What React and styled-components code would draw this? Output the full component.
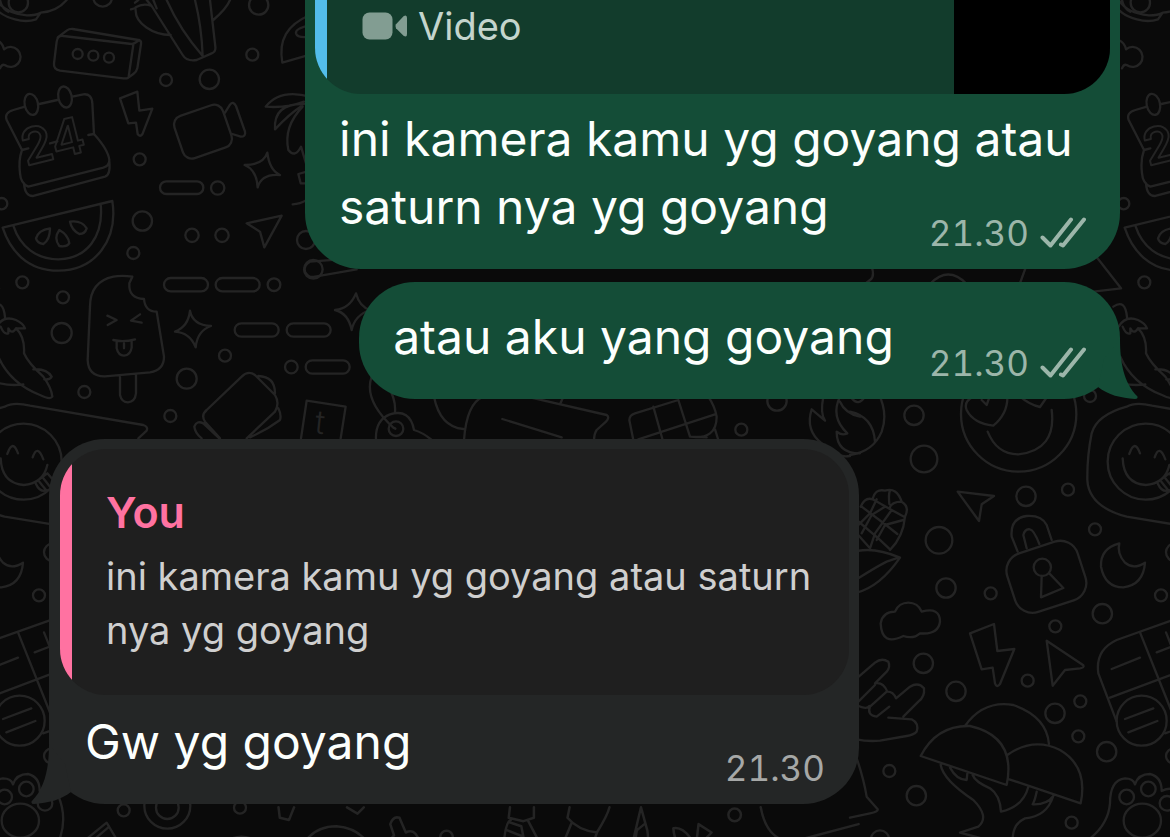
import React from 'react';
import styled, { createGlobalStyle, css } from 'styled-components';

const GlobalStyle = createGlobalStyle`
  * { box-sizing: border-box; }
  body {
    margin: 0;
    background: #0a0a0a;
    font-family: Inter, "Liberation Sans", sans-serif;
  }
  p { margin: 0; }
`;

const Screen = styled.main`
  position: relative;
  z-index: 0;
  min-height: 100vh;
  overflow: hidden;
  display: flex;
  flex-direction: column;
  padding: 0 50px 32px 49px;
`;

const WallpaperSvg = styled.svg`
  position: absolute;
  inset: 0;
  z-index: -1;
  width: 100%;
  height: 100%;
  fill: none;
  stroke: #242424;
  stroke-linecap: round;
  stroke-linejoin: round;
`;

const Bubble = styled.article`
  position: relative;
  max-width: 815px;
  align-self: flex-end;
  color: #fcfffd;
  background: #144d37;
  border-radius: ${(p) => (p.$cut ? '0 0 56px 56px' : '56px')};
  margin-top: ${(p) => p.$gap || 0}px;
  ${(p) =>
    p.$incoming &&
    css`
      max-width: 810px;
      align-self: flex-start;
      background: #242626;
      padding-top: 10px;
    `}
`;

const Tail = styled.svg`
  position: absolute;
  bottom: 0;
  width: 42px;
  height: 60px;
  ${(p) => (p.$incoming ? 'left: -18px; transform: scaleX(-1);' : 'right: -18px;')}
  fill: ${(p) => (p.$incoming ? '#242626' : '#144d37')};
`;

const Quote = styled.blockquote`
  display: flex;
  margin: 0 10px 0 ${(p) => (p.$incoming ? 11 : 10)}px;
  overflow: hidden;
  background: ${(p) => (p.$incoming ? '#1f1f1f' : '#123c2c')};
  border-left: 0;
  border-radius: ${(p) => (p.$incoming ? '46px' : '0 0 46px 46px')};
`;

const Accent = styled.div`
  flex: 0 0 12px;
  background: ${(p) => p.$color};
`;

const QuoteBody = styled.div`
  flex: 1;
  min-width: 0;
  margin-top: ${(p) => (p.$incoming ? 0 : -1)}px;
  padding: ${(p) => (p.$incoming ? '36px 24px 38px 34px' : '0 34px 41px 35px')};
`;

const Author = styled.h2`
  margin: 0 0 10px;
  font-size: 43px;
  line-height: 54px;
  font-weight: 600;
  color: #ff72a1;
`;

const Excerpt = styled.p`
  display: flex;
  align-items: center;
  gap: 10px;
  font-size: 38px;
  line-height: 54px;
  color: ${(p) => (p.$incoming ? '#cfcfcf' : '#c4d5cd')};
`;

const Thumb = styled.div`
  flex: 0 0 156px;
  background: #000;
`;

const Content = styled.div`
  display: grid;
  grid-template-columns: ${(p) => (p.$inline ? '1fr auto' : '1fr')};
  column-gap: 35px;
  align-items: end;
  padding: ${(p) => p.$top}px 34px 14px ${(p) => (p.$incoming ? 36 : 34)}px;
`;

const Message = styled.p`
  grid-area: 1 / 1;
  margin-bottom: 14px;
  font-size: 48px;
  line-height: 68px;
`;

const Meta = styled.div`
  grid-row: 1;
  grid-column: ${(p) => (p.$inline ? 2 : 1)};
  justify-self: end;
  display: flex;
  align-items: center;
  gap: 11px;
  font-size: 35px;
  font-variant-numeric: tabular-nums;
  line-height: 44px;
  color: ${(p) => (p.$incoming ? '#a6a8a7' : '#9cb6aa')};
`;

const TickSvg = styled.svg`
  width: 46px;
  height: 32px;
  fill: none;
  stroke: currentColor;
  stroke-width: 4;
  stroke-linecap: round;
  stroke-linejoin: round;
`;

const CameraSvg = styled.svg`
  width: 46px;
  height: 28px;
  fill: #829d92;
`;

const Ticks = () => (
  <TickSvg viewBox="0 0 46 32" role="img" aria-label="Delivered">
    <path d="M2.500 20.500L10.500 28.500L31 2.500M21 27.500L23 28.500L44 2.500" />
  </TickSvg>
);

const Camera = () => (
  <CameraSvg viewBox="0 0 46 28" aria-hidden="true">
    <rect x="0.500" y="0.500" width="30" height="27" rx="7" />
    <path d="M34 12.200L41.500 4.200Q45 2 45 6V22Q45 26 41.500 23.800L34 16.200Q32.800 14.200 34 12.200Z" />
  </CameraSvg>
);

const BubbleTail = ({ incoming }) => (
  <Tail $incoming={incoming} viewBox="0 0 42 60" aria-hidden="true">
    <path d="M24 0C24 24 28 44 41.500 57.500Q42 60 39 60C25 59 12 56 2 48L8 20Z" />
  </Tail>
);

const Time = ({ incoming, inline, children }) => (
  <Meta $incoming={incoming} $inline={inline}>
    <time>{children}</time>
    {!incoming && <Ticks />}
  </Meta>
);

const Dots = ({ items }) => items.map(([x, y, r]) => <circle key={`${x}-${y}`} cx={x} cy={y} r={r} />);
const Pills = ({ items }) =>
  items.map(([x, y]) => <rect key={`${x}-${y}`} x={x} y={y} width="132" height="40" rx="20" />);

const THIRD = 'scale(0.33333)';

const Wallpaper = () => (
  <WallpaperSvg aria-hidden="true">
    <defs>
      <g id="doodles" strokeWidth="7">
        {/* bowl, cactus, brick, calendar, camcorder, palm, watermelon */}
        <g transform={THIRD}>
          <Dots items={[[308, -8, 28], [776, 15, 29], [757, 164, 18], [498, 240, 18], [628, 238, 29], [419, 478, 18], [653, 564, 20], [427, 663, 29], [576, 706, 20], [666, 706, 20], [400, 759, 18], [5, 611, 17], [918, 720, 27], [940, 808, 28], [55, 8, 29], [233, 162, 15], [280, 167, 15], [327, 173, 15]]} />
          <path d="M-30 0Q-10 45 45 58Q80 68 108 58L122 38M-10 0Q15 40 80 46Q110 46 122 38Q170 35 200 0M0 0Q5 25 25 35" />
          <path d="M405 8L415 0M393 28L407 24M407 30C405 70 460 105 512 105M407 22Q430 8 455 18L548 165Q560 185 590 180L635 160Q648 155 646 140L630 0M455 18L440 0M500 0Q540 90 608 168M585 0Q605 80 608 168M460 0L470 25M640 60Q680 25 690 0" />
          <path d="M930 45C860 75 835 120 847 188L930 164M930 76Q885 85 888 100Q892 115 930 110" />
          <path d="M-10 120Q8 128 12 148A30 30 0 1 1 14 195Q5 192 0 205" />
          <path d="M173 112L200 92Q208 86 218 87L415 120Q425 122 423 132L412 205Q410 215 400 222L385 233Q380 236 370 235L180 212Q160 208 162 190L170 125Q173 105 190 108L395 132Q402 132 418 120M400 134L386 230" />
          <path d="M75 320L40 330Q12 338 20 360L66 450Q55 480 60 520Q62 550 85 560L310 503Q328 498 328 480Q325 450 282 402L277 310Q275 280 250 283L217 290M118 312L172 300M66 450L85 445M150 430L172 424M265 405L282 402M72 550Q75 590 100 588L315 530Q332 525 328 485" />
          <ellipse cx="94" cy="313" rx="20" ry="32" transform="rotate(-12 94 313)" />
          <ellipse cx="195" cy="291" rx="20" ry="32" transform="rotate(-12 195 291)" />
          <text x="78" y="498" fontSize="150" fontWeight="600" transform="rotate(-14 78 498)" strokeWidth="6">24</text>
          <path d="M360 295L412 275L418 332L457 326L427 403Q420 412 413 402L408 368L385 370Z" />
          <rect x="532" y="328" width="154" height="134" rx="28" transform="rotate(-19 609 395)" />
          <path d="M675 338L690 314Q700 302 708 318L735 395Q738 410 722 410L697 402" />
          <rect x="480" y="544" width="130" height="38" rx="19" />
          <path d="M930 290Q840 265 797 320Q860 325 912 305M912 312Q820 310 825 388Q870 340 905 318M908 320Q850 380 865 450Q885 475 903 440L918 490M930 512L895 522L902 550L930 550M878 613Q900 612 920 600" />
          <path d="M734 495Q790 495 802 458Q808 510 840 525Q785 520 773 562Q770 510 734 495Z" />
          <path d="M740 670L845 647L793 742L780 695Z" />
          <path d="M8 683L337 603C355 720 285 812 175 812C80 812 30 750 8 683ZM40 677C60 740 110 778 175 778C260 776 312 710 302 612" />
          <path d="M108 715Q115 690 150 685Q150 720 130 732Q112 730 108 715ZM178 690Q205 705 208 730Q200 742 178 738Q160 715 178 690ZM210 665Q245 660 260 685Q255 702 238 702Q215 690 210 665Z" />
        </g>

        {/* chili, ice pop, sparkles, smiley, backpack */}
        <g transform={`translate(0 260) ${THIRD}`}>
          <Dots items={[[67, 67, 18], [189, 112, 18], [185, 219, 30], [253, 396, 18], [560, 356, 30], [511, 468, 18], [675, 287, 18], [874, 321, 19], [822, 74, 19], [-96, 408, 18], [71, 605, 114]]} />
          <Pills items={[[492, 54], [647, 54], [704, 190], [860, 190], [917, 301]]} />
          <path d="M397 50Q365 45 340 50Q270 65 270 140L263 300Q265 350 315 349L450 337Q492 330 492 290L470 155Q435 155 432 117Q385 115 388 70ZM360 350V405Q365 427 384 427Q405 425 408 400V345M322 167L350 180L323 195M420 163L393 182L425 188M340 240Q370 248 405 238M350 243V265Q355 287 372 287Q392 285 395 262V242M372 250V265" />
          <path d="M570 152Q578 195 633 198Q592 212 587 262Q570 218 525 215Q565 200 570 152ZM1068 100Q1078 140 1110 150Q1065 165 1055 210Q1045 160 1005 150Q1050 145 1068 100Z" />
          <path d="M1060 -5L930 5Q910 15 915 35Q925 55 945 50L1070 28" />
          <path d="M-26 140Q10 115 15 172M-10 200Q10 165 48 180Q70 190 75 205L50 205M2 200Q12 225 25 220L25 205Q35 225 48 205Q75 230 72 280Q85 310 130 350Q155 385 157 410Q150 420 120 405Q30 370 -5 290M100 328Q140 325 155 350Q150 360 133 358M0 370Q35 378 70 373" />
          <path d="M415 535L440 512Q445 500 430 495L90 437Q40 425 14 440Q-76 465 -91 520Q-105 590 -104 660Q-100 740 14 770L180 797" />
          <path d="M2 595Q5 670 71 675Q130 670 142 615M22 582Q38 535 54 580M98 592Q112 550 130 598M105 668L142 640L155 655M118 665L138 690M130 655L150 680M108 672Q120 700 145 690" />
          <path d="M660 535L615 485Q602 465 620 450L725 350Q745 330 765 345L825 405Q840 430 825 455L740 535M775 348Q825 350 825 400M835 445Q845 465 840 480Q800 510 750 532M658 535L610 490Q590 480 583 500Q585 520 605 535" />
          <path d="M903 535L920 422L1037 440L1022 535" />
          <text x="942" y="520" fontSize="98" fontWeight="300" transform="rotate(6 942 520)" stroke="none" fill="#242424">t</text>
        </g>

        {/* gap between the sent and the received bubbles */}
        <g transform={`translate(360 380) ${THIRD}`}>
          <Dots items={[[108, 146, 22], [1251, 63, 29], [1144, 149, 18]]} />
          <path d="M35 -10Q10 60 100 143L106 146M85 20Q108 60 105 95M48 180Q45 120 90 103Q150 85 162 150Q190 158 215 180M222 50Q240 140 310 147M312 180Q320 70 370 50M510 52L740 105Q750 112 738 125L710 150Q703 160 702 180M427 117L605 172M602 68L610 50" />
          <path d="M820 180L808 120Q808 105 825 100L955 60L990 170Q1070 180 1070 110Q1065 80 1045 50M880 80L908 180M835 178L1065 103M990 170L1040 172M1065 148L1075 180" />
          <path d="M1390 50Q1380 100 1395 122L1355 88Q1335 150 1385 190Q1420 235 1470 228M1440 50Q1410 110 1462 160Q1445 168 1430 155Q1430 220 1500 220M1440 65Q1455 100 1500 110" />
        </g>

        {/* heart-eyed face and the pieces between the green bubbles */}
        <g transform={`translate(850 260) ${THIRD}`}>
          <Dots items={[[192, 466, 29], [222, 597, 40], [506, 462, 173]]} />
          <path d="M85 400Q115 460 95 515Q70 575 0 585M0 455Q70 470 75 545M5 415Q25 440 45 410M413 515Q440 583 505 583Q620 570 605 450M370 410Q340 425 350 450Q370 490 430 497Q475 460 472 405M395 420L410 435L418 412M510 410Q540 435 570 441L595 405" />
          <path d="M65 20Q75 50 60 60L45 72M240 72Q295 15 350 72M528 20L508 75M700 -60L813 85L730 95" />
        </g>

        {/* corn, cloud, lock, moon, bolt, hand, mushrooms, paw */}
        <g transform={`translate(850 470) ${THIRD}`}>
          <Dots items={[[528, 79, 29], [654, 59, 18], [267, 211, 40], [288, 354, 29], [422, 370, 18], [735, 178, 18], [933, 376, 18], [757, 431, 29], [616, 469, 18], [220, 580, 29], [318, 664, 29], [533, 632, 18], [615, 730, 29], [691, 694, 18], [685, 799, 18], [770, 845, 29], [118, 903, 18], [199, 977, 29], [665, 1058, 18], [90, 1108, 27], [975, 247, 27], [970, 858, 22], [577, 292, 26], [875, 752, 75], [830, 981, 22], [895, 957, 22], [951, 1000, 22]]} />
          <path d="M323 65L432 78L395 103L387 153Z" />
          <path d="M32 110Q45 80 68 88Q75 55 105 62Q140 50 155 95Q180 110 165 140Q160 200 120 240M68 88L125 120L165 142M35 110L108 165L142 192M20 150L85 205L120 238M118 102Q115 70 120 62M155 95Q125 95 118 115M105 110L65 135L35 190M125 120L75 190L60 235M160 150L105 165L80 210M80 88L60 130L20 170M20 190L60 235" />
          <path d="M0 250Q60 225 150 263Q90 350 20 368M20 328Q80 290 110 275L145 263" />
          <path d="M135 425A43 43 0 0 1 215 425Q270 410 270 455Q265 495 210 490Q190 508 160 498Q95 530 92 460Q98 425 135 425Z" />
          <rect x="478" y="228" width="222" height="185" rx="55" transform="rotate(-18 589 320)" />
          <path d="M503 245L485 200Q480 145 530 138Q575 135 590 165L605 210M530 235L520 195Q525 175 540 178Q552 180 568 222M575 318L573 382L640 354L598 310" />
          <path d="M808 220Q750 235 753 290Q765 352 820 352Q880 345 885 278Q850 300 825 278Q800 250 808 220Z" />
          <path d="M360 490L432 462L442 543L493 537L450 642Q440 655 435 640L428 593L395 598Z" />
          <path d="M590 512L700 586Q704 593 690 595L645 600L608 647Z" />
          <path d="M980 446L800 510Q735 540 745 610L800 755M780 683L980 608M870 487L975 750M785 597L870 563M920 547L970 528M948 487L965 530M825 747L910 715M835 787L922 753M945 790L980 778" />
          <path d="M20 625L75 578Q95 562 115 575Q122 590 110 605L75 640Q100 635 112 665Q130 665 138 685L180 650Q205 635 222 655Q225 680 205 695L160 740M115 743L185 748Q208 760 200 785Q190 795 170 798L90 812Q50 815 20 808M20 700L75 645M110 665L60 710Q50 735 80 740L118 710M20 705Q50 720 58 708" />
          <path d="M212 858L470 945Q500 800 360 768Q260 765 212 858ZM345 768Q400 690 490 705Q590 740 597 822M472 855Q550 800 630 840Q715 890 692 1000L478 928M272 885Q280 930 370 990Q420 1040 385 1070L330 1088L390 1104M300 893Q320 930 350 930L352 910M368 915Q375 935 420 955Q450 975 453 1025Q520 1010 535 950M560 965Q555 990 548 1003Q590 1005 610 978Q590 1040 525 1045Q490 1060 488 1105" />
          <path d="M722 1104Q775 1060 780 1000Q780 930 825 925Q850 925 855 943Q865 912 900 912Q935 920 935 963Q970 945 990 975Q1018 1040 996 1104" />
          <ellipse cx="877" cy="1052" rx="56" ry="51" />
          <path d="M15 850Q40 920 50 980L83 1018Q85 1025 60 1030L0 1043" />
        </g>

        {/* strip under the received bubble */}
        <g transform={`translate(0 430) ${THIRD}`}>
          <Dots items={[[371, 1141, 18], [502, 1133, 34], [502, 1127, 69], [720, 1133, 18]]} />
          <path d="M262 1225L320 1178L348 1225M290 1222L325 1192" />
        </g>
        <g transform="translate(200 780) scale(0.42)" strokeWidth="6">
          <Dots items={[[587, 136, 15], [1273, 83, 15]]} />
          <path d="M28 175Q100 95 168 175M236 175Q260 110 325 110Q390 115 412 175M278 168L298 156M330 155Q355 155 368 168M187 65L190 90L212 95L224 65M350 65L375 80L390 65M455 175Q450 140 462 132L453 105Q460 85 475 90L490 125Q510 115 520 140L532 175" />
          <path d="M738 65L735 90L770 98L795 90L795 65M722 175Q725 100 740 95M732 120L770 135L765 110L735 100M780 95L822 175M812 145L865 150L885 102M880 65L875 90Q900 120 945 125Q970 85 975 65M945 125L932 165L1028 158M1050 65L1028 158M1050 65L1065 120Q1070 150 1060 175M1032 175L1040 120L1058 105" />
          <path d="M1127 115Q1150 110 1172 145L1165 165Q1130 160 1127 115ZM1187 105L1218 125L1180 165ZM1190 175Q1230 120 1268 175M1335 65Q1350 145 1410 147L1568 105" />
        </g>
      </g>
    </defs>
    <use href="#doodles" />
    <use href="#doodles" x="1122" />
    <use href="#doodles" x="-1122" />
  </WallpaperSvg>
);

export default function App() {
  return (
    <>
      <GlobalStyle />
      <Screen>
        <Wallpaper />

        <Bubble $cut>
          <Quote>
            <Accent $color="#53bdeb" />
            <QuoteBody>
              <Excerpt>
                <Camera />
                Video
              </Excerpt>
            </QuoteBody>
            <Thumb />
          </Quote>
          <Content $top={11}>
            <Message>ini kamera kamu yg goyang atau saturn nya yg goyang</Message>
            <Time>21.30</Time>
          </Content>
        </Bubble>

        <Bubble $gap={13}>
          <Content $inline $top={21}>
            <Message>atau aku yang goyang</Message>
            <Time inline>21.30</Time>
          </Content>
          <BubbleTail />
        </Bubble>

        <Bubble $incoming $gap={40}>
          <Quote $incoming>
            <Accent $color="#ff72a1" />
            <QuoteBody $incoming>
              <Author>You</Author>
              <Excerpt $incoming>ini kamera kamu yg goyang atau saturn nya yg goyang</Excerpt>
            </QuoteBody>
          </Quote>
          <Content $incoming $top={13}>
            <Message>Gw yg goyang</Message>
            <Time incoming>21.30</Time>
          </Content>
          <BubbleTail incoming />
        </Bubble>
      </Screen>
    </>
  );
}
